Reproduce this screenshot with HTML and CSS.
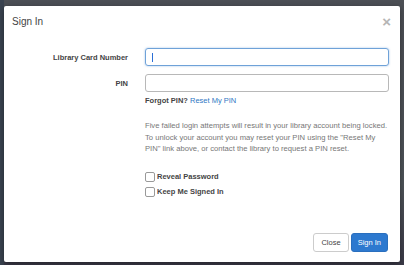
FILE: index.html
```html
<!DOCTYPE html>
<html lang="en">
<head>
  <meta charset="UTF-8">
  <title>Sign In</title>
  <link rel="stylesheet" href="styles.css">
</head>
<body>

  <div class="fondo">
    <div class="modal">

      <div class="cabecera">
        <h4 class="titulo">Sign In</h4>
        <span class="cerrar">&times;</span>
      </div>

      <div class="cuerpo">
        <div class="fila">
          <label class="etiqueta" for="tarjeta">Library Card Number</label>
          <div class="campo activo" id="tarjeta"><span class="cursor"></span></div>
        </div>

        <div class="fila">
          <label class="etiqueta" for="pin">PIN</label>
          <div class="campo" id="pin"></div>
        </div>

        <div class="fila">
          <span></span>
          <div class="detalle">
            <p class="olvido"><b>Forgot PIN?</b> <a href="#">Reset My PIN</a></p>
            <p class="aviso">Five failed login attempts will result in your library account being locked. To unlock your account you may reset your PIN using the "Reset My PIN" link above, or contact the library to request a PIN reset.</p>
            <label class="check"><span class="caja"></span>Reveal Password</label>
            <label class="check"><span class="caja"></span>Keep Me Signed In</label>
          </div>
        </div>
      </div>

      <div class="pie">
        <button class="boton">Close</button>
        <button class="boton primario">Sign In</button>
      </div>

    </div>
  </div>

</body>
</html>
```

FILE: styles.css
```css
body {
  margin: 0;
  background: #4b4f55;
  font-family: "Liberation Sans", Arial, sans-serif;
}

.fondo {
  width: 404px;
  height: 265px;
  box-sizing: border-box;
  padding: 6px 4px 3px 4px;
  background: linear-gradient(90deg, #3a4350 0, #3a4350 4px, transparent 4px),
              linear-gradient(180deg, #4c4f55, #4f5459 70%, #3b3a48);
}

.modal {
  width: 396px;
  height: 256px;
  background: #fff;
  border-radius: 2px;
  box-shadow: 0 2px 6px rgba(0,0,0,0.4);
  display: flex;
  flex-direction: column;
}

.cabecera {
  display: flex;
  justify-content: space-between;
  align-items: center;
  padding: 8px 9px 0 8px;
  height: 15px;
}

.titulo {
  margin: 0;
  font-size: 10px;
  font-weight: normal;
  color: #444;
}

.cerrar {
  font-size: 15px;
  font-weight: bold;
  color: #b5b5b5;
  line-height: 1;
}

.cuerpo {
  padding: 19px 11px 0 8px;
  flex: 1;
}

.fila {
  display: grid;
  grid-template-columns: 116px 1fr;
  column-gap: 17px;
  align-items: center;
  margin-bottom: 8px;
}

.etiqueta {
  text-align: right;
  font-size: 7.5px;
  font-weight: bold;
  color: #444;
}

.campo {
  height: 18px;
  box-sizing: border-box;
  border: 1px solid #b8b8b8;
  border-radius: 3px;
  display: flex;
  align-items: center;
  padding-left: 6px;
}

.activo {
  border-color: #6fa2d8;
  box-shadow: 0 0 2px rgba(80,140,210,0.6);
}

.cursor {
  width: 1px;
  height: 9px;
  background: #2b6fd6;
}

.detalle {
  margin-top: -4px;
}

.olvido {
  margin: 0;
  font-size: 7.5px;
  color: #444;
}

.olvido a {
  color: #2f78c4;
  text-decoration: none;
}

.aviso {
  margin: 15px 0 17px 0;
  font-size: 7.65px;
  line-height: 11.5px;
  color: #777;
}

.check {
  display: flex;
  align-items: center;
  font-size: 7.5px;
  font-weight: bold;
  color: #444;
  margin-bottom: 5px;
}

.caja {
  width: 8px;
  height: 8px;
  border: 1px solid #999;
  border-radius: 2px;
  margin-right: 2px;
}

.pie {
  display: flex;
  justify-content: flex-end;
  gap: 2px;
  padding: 0 12px 10px 0;
}

.boton {
  height: 19px;
  padding: 0 7px;
  font-family: inherit;
  font-size: 7.5px;
  border: 1px solid #ccc;
  border-radius: 3px;
  background: #fff;
  color: #444;
}

.primario {
  background: #2d79cf;
  border-color: #2a6fbe;
  color: #fff;
  padding: 0 6px;
}
```
